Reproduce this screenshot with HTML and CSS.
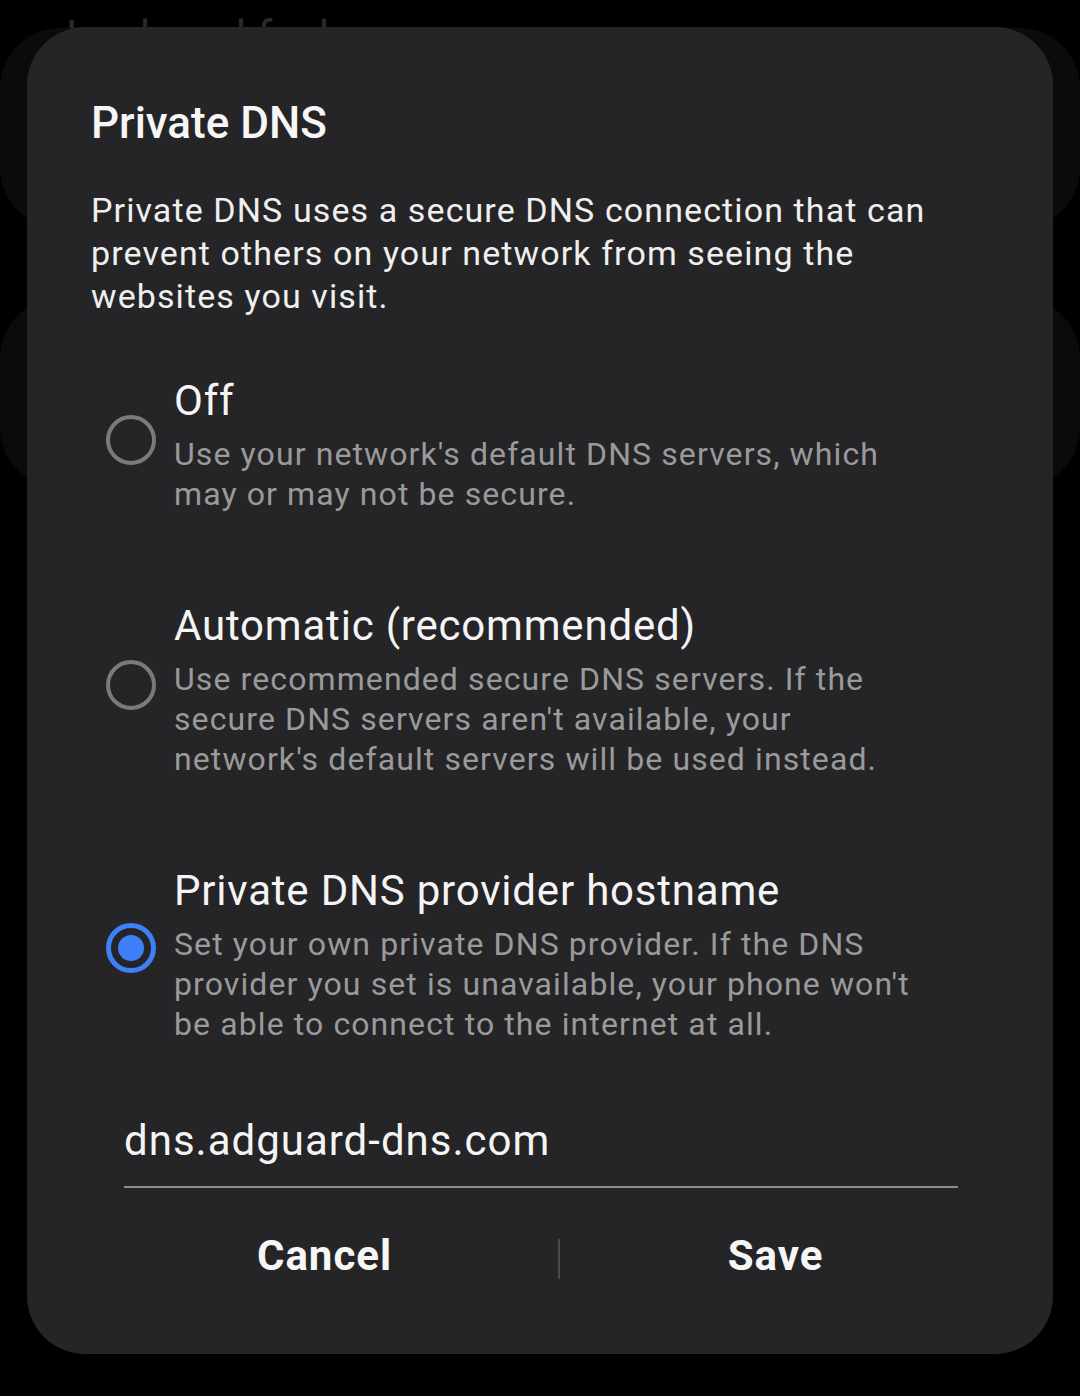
FILE: index.html
```html
<!DOCTYPE html>
<html lang="en">
<head>
<meta charset="utf-8">
<title>Private DNS</title>
<link rel="stylesheet" href="styles.css">
</head>
<body>
<div class="screen">
  <div class="behind">
    <div class="behind-title">Look and feel</div>
    <div class="behind-card behind-card-1"></div>
    <div class="behind-card behind-card-2"></div>
  </div>

  <div class="dialog">
    <h1 class="dialog-title">Private DNS</h1>
    <p class="dialog-desc">Private DNS uses a secure DNS connection that can<br>prevent others on your network from seeing the<br>websites you visit.</p>

    <div class="options">
      <div class="option">
        <span class="radio"></span>
        <div class="option-text">
          <div class="option-title">Off</div>
          <div class="option-desc">Use your network's default DNS servers, which<br>may or may not be secure.</div>
        </div>
      </div>

      <div class="option">
        <span class="radio"></span>
        <div class="option-text">
          <div class="option-title">Automatic (recommended)</div>
          <div class="option-desc">Use recommended secure DNS servers. If the<br>secure DNS servers aren't available, your<br>network's default servers will be used instead.</div>
        </div>
      </div>

      <div class="option">
        <span class="radio radio-checked"></span>
        <div class="option-text">
          <div class="option-title">Private DNS provider hostname</div>
          <div class="option-desc">Set your own private DNS provider. If the DNS<br>provider you set is unavailable, your phone won't<br>be able to connect to the internet at all.</div>
        </div>
      </div>
    </div>

    <div class="hostname">dns.adguard-dns.com</div>

    <div class="actions">
      <div class="action action-cancel">Cancel</div>
      <div class="action-divider"></div>
      <div class="action action-save">Save</div>
    </div>
  </div>
</div>
</body>
</html>
```

FILE: styles.css
```css
* {
  box-sizing: border-box;
}

html, body {
  margin: 0;
  padding: 0;
  background: #000;
}

body {
  font-family: Roboto, "Noto Sans", "Liberation Sans", sans-serif;
  color: #f4f4f4;
}

.screen {
  position: relative;
  width: 1080px;
  height: 1396px;
  overflow: hidden;
  background: #000;
}

/* dimmed page behind the dialog */
.behind {
  display: flex;
  flex-direction: column;
  padding-top: 12px;
}

.behind-title {
  padding-left: 66px;
  font-size: 44px;
  line-height: 50px;
  color: #2a2a2a;
  height: 50px;
}

.behind-card {
  background: #0b0b0b;
  border-radius: 60px;
}

.behind-card-1 {
  height: 200px;
  margin-top: -34px;
}

.behind-card-2 {
  height: 190px;
  margin-top: 70px;
}

/* dialog */
.dialog {
  position: absolute;
  left: 27px;
  top: 27px;
  width: 1026px;
  height: 1327px;
  background: #252527;
  border-radius: 58px;
  padding: 68px 64px 0 64px;
  display: flex;
  flex-direction: column;
}

.dialog-title {
  margin: 0;
  font-size: 44px;
  line-height: 56px;
  font-weight: 500;
  color: #f6f6f6;
}

.dialog-desc {
  margin: 38px 0 0 0;
  font-size: 34px;
  line-height: 43px;
  font-weight: 400;
  letter-spacing: 1.1px;
  color: #efefef;
  white-space: nowrap;
}

.options {
  display: flex;
  flex-direction: column;
  gap: 87px;
  margin-top: 58px;
}

.option {
  display: flex;
  align-items: center;
}

.radio {
  flex: 0 0 auto;
  width: 50px;
  height: 50px;
  margin-left: 15px;
  margin-right: 18px;
  margin-bottom: 10px;
  border: 4px solid #7a7a7a;
  border-radius: 50%;
  display: flex;
  align-items: center;
  justify-content: center;
}

.radio-checked {
  border: 5px solid #3e80f8;
  margin-bottom: 14px;
}

.radio-checked::after {
  content: "";
  width: 26px;
  height: 26px;
  border-radius: 50%;
  background: #3e80f8;
}

.option-text {
  display: flex;
  flex-direction: column;
  gap: 8px;
}

.option-title {
  font-size: 42px;
  line-height: 50px;
  letter-spacing: 0.8px;
  color: #f4f4f4;
  white-space: nowrap;
}

.option-desc {
  font-size: 32px;
  line-height: 40px;
  letter-spacing: 1.1px;
  color: #9a9a9a;
  white-space: nowrap;
}

.hostname {
  margin: 72px 31px 0 33px;
  font-size: 42px;
  line-height: 50px;
  letter-spacing: 1px;
  color: #f4f4f4;
  padding-bottom: 20px;
  border-bottom: 2px solid #8c8c8c;
}

.actions {
  display: grid;
  grid-template-columns: minmax(0, 1fr) 2px minmax(0, 1fr);
  align-items: center;
  margin: 40px -38px 0 0;
  height: 56px;
}

.action {
  text-align: center;
  font-size: 42px;
  line-height: 56px;
  font-weight: 700;
  letter-spacing: 1px;
  color: #f6f6f6;
}

.action-save {
  padding-right: 36px;
}

.action-divider {
  width: 2px;
  height: 40px;
  margin-top: 6px;
  background: #4a4a4c;
}
```
